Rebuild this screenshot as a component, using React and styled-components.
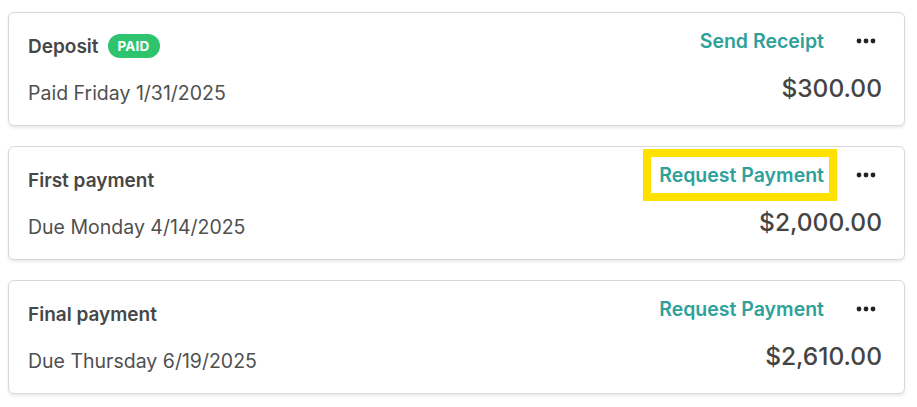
import React from "react";
import styled, { createGlobalStyle } from "styled-components";

const GlobalStyle = createGlobalStyle`
  body {
    margin: 0;
    background: #fff;
    font-family: Inter, "Noto Sans", sans-serif;
  }
`;

const payments = [
  { title: "Deposit", paid: true, date: "Paid Friday 1/31/2025", action: "Send Receipt", amount: "$300.00" },
  { title: "First payment", date: "Due Monday 4/14/2025", action: "Request Payment", amount: "$2,000.00", highlight: true },
  { title: "Final payment", date: "Due Thursday 6/19/2025", action: "Request Payment", amount: "$2,610.00" },
];

export default function App() {
  return (
    <>
      <GlobalStyle />
      <List>
        {payments.map((p) => (
          <Card key={p.title}>
            <Left>
              <TitleRow>
                <Title>{p.title}</Title>
                {p.paid && <Badge>PAID</Badge>}
              </TitleRow>
              <DateText>{p.date}</DateText>
            </Left>
            <Right>
              <Actions>
                <ActionButton $highlight={p.highlight}>{p.action}</ActionButton>
                <More aria-label="More">
                  <svg width="20" height="6" viewBox="0 0 20 6">
                    <circle cx="3" cy="3" r="2.4" fill="#222" />
                    <circle cx="10" cy="3" r="2.4" fill="#222" />
                    <circle cx="17" cy="3" r="2.4" fill="#222" />
                  </svg>
                </More>
              </Actions>
              <Amount>{p.amount}</Amount>
            </Right>
          </Card>
        ))}
      </List>
    </>
  );
}

const List = styled.div`
  padding: 12px 12px 8px 8px;
  display: flex;
  flex-direction: column;
  gap: 20px;
`;

const Card = styled.div`
  box-sizing: border-box;
  height: 114px;
  border: 1px solid #d6d9de;
  border-radius: 6px;
  box-shadow: 0 2px 3px rgba(60, 70, 90, 0.12);
  background: #fff;
  padding: 15px 22px 0 19px;
  display: flex;
  justify-content: space-between;
`;

const Left = styled.div`
  display: flex;
  flex-direction: column;
  padding-top: 6px;
`;

const TitleRow = styled.div`
  display: flex;
  align-items: center;
  gap: 9px;
  height: 24px;
`;

const Title = styled.span`
  font-size: 19px;
  font-weight: 600;
  color: #474747;
`;

const Badge = styled.span`
  background: #2ec46d;
  color: #fff;
  font-size: 13.5px;
  font-weight: 700;
  height: 24px;
  line-height: 24px;
  padding: 0 10px;
  border-radius: 12px;
  letter-spacing: 0.2px;
`;

const DateText = styled.div`
  margin-top: 23px;
  font-size: 19.5px;
  line-height: 24px;
  color: #505050;
`;

const Right = styled.div`
  display: flex;
  flex-direction: column;
  align-items: flex-end;
`;

const Actions = styled.div`
  display: flex;
  align-items: center;
  gap: 32px;
  height: 26px;
`;

const ActionButton = styled.button`
  position: relative;
  border: none;
  background: #fff;
  padding: 0;
  height: 26px;
  font-family: inherit;
  font-size: 19.5px;
  font-weight: 600;
  color: #2fa19b;
  cursor: pointer;
  ${(p) =>
    p.$highlight &&
    `
    &::after {
      content: "";
      position: absolute;
      top: -13px;
      bottom: -13px;
      left: -16px;
      right: -13px;
      border: 8px solid #ffe100;
      pointer-events: none;
    }
  `}
`;

const More = styled.button`
  border: none;
  background: none;
  padding: 0;
  margin-right: 6px;
  display: flex;
  cursor: pointer;
`;

const Amount = styled.div`
  margin-top: 19px;
  font-size: 24.5px;
  font-weight: 500;
  line-height: 30px;
  color: #444;
`;
